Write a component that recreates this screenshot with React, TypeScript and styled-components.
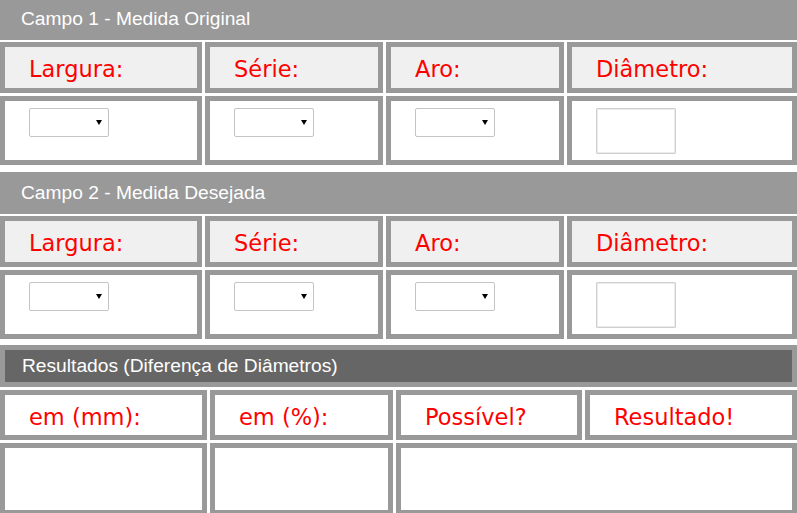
import React from "react";
import styled, { createGlobalStyle } from "styled-components";

const GlobalStyle = createGlobalStyle`
  html, body { margin: 0; padding: 0; background: #ffffff; }
  body { font-family: "Liberation Sans", Arial, sans-serif; overflow: hidden; }
  * { box-sizing: border-box; }
`;

const Page = styled.div`
  width: 797px;
  margin-top: -2px;
  display: flex;
  flex-direction: column;
`;

const Section = styled.section<{ $top?: number }>`
  display: flex;
  flex-direction: column;
  margin-top: ${(p) => p.$top ?? 0}px;
`;

const SectionHeader = styled.div<{ $dark?: boolean }>`
  height: 42px;
  display: flex;
  align-items: center;
  padding-left: ${(p) => (p.$dark ? 17 : 21)}px;
  background: ${(p) => (p.$dark ? "#666666" : "#999999")};
  border: ${(p) => (p.$dark ? "5px solid #999999" : "none")};
  color: #ffffff;
  font-family: "Liberation Sans", Arial, sans-serif;
  font-size: 19.2px;
  padding-bottom: ${(p) => (p.$dark ? 0 : 1)}px;
`;

const Row = styled.div<{ $cols: string; $top: number }>`
  display: grid;
  grid-template-columns: ${(p) => p.$cols};
  column-gap: 3px;
  margin-top: ${(p) => p.$top}px;
`;

const LabelCell = styled.div<{ $white?: boolean; $h: number }>`
  height: ${(p) => p.$h}px;
  border: 5px solid #999999;
  background: ${(p) => (p.$white ? "#ffffff" : "#f0f0f0")};
  display: flex;
  align-items: center;
  padding-left: 24px;
  padding-top: 3px;
  color: #ff0000;
  font-family: "DejaVu Sans", Verdana, sans-serif;
  font-size: 22.5px;
`;

const InputCell = styled.div<{ $h: number; $span?: number }>`
  height: ${(p) => p.$h}px;
  border: 5px solid #999999;
  background: #ffffff;
  padding: 7px 0 0 24px;
  grid-column: ${(p) => (p.$span ? `span ${p.$span}` : "auto")};
`;

const SelectWrap = styled.span`
  position: relative;
  display: inline-block;
  width: 80px;
  height: 29px;
  &::after {
    content: "";
    position: absolute;
    right: 7px;
    top: 12px;
    border-left: 3px solid transparent;
    border-right: 3px solid transparent;
    border-top: 5px solid #000000;
    pointer-events: none;
  }
`;

const Select = styled.select`
  appearance: none;
  -webkit-appearance: none;
  width: 80px;
  height: 29px;
  margin: 0;
  border: 1px solid #c4c4c4;
  border-radius: 2px;
  background: #ffffff;
  font-family: "Liberation Sans", Arial, sans-serif;
  font-size: 13px;
  outline: none;
`;

const TextBox = styled.input`
  display: block;
  width: 80px;
  height: 46px;
  margin: 0;
  border: 1px solid #cfcfcf;
  box-shadow: inset 0 0 0 1px #ececec;
  border-radius: 1px;
  background: #ffffff;
  outline: none;
  font-family: "Liberation Sans", Arial, sans-serif;
  font-size: 14px;
`;

const FIELD_COLS = "202px 178px 178px 230px";
const RESULT_COLS = "207px 183px 186px 212px";

const fields = ["Largura:", "Série:", "Aro:"];

function Campo({ title, top }: { title: string; top: number }) {
  return (
    <Section $top={top}>
      <SectionHeader>{title}</SectionHeader>
      <Row $cols={FIELD_COLS} $top={2}>
        {fields.map((f) => (
          <LabelCell key={f} $h={51}>
            {f}
          </LabelCell>
        ))}
        <LabelCell $h={51}>Diâmetro:</LabelCell>
      </Row>
      <Row $cols={FIELD_COLS} $top={3}>
        {fields.map((f) => (
          <InputCell key={f} $h={69}>
            <SelectWrap>
              <Select defaultValue="">
                <option value=""></option>
              </Select>
            </SelectWrap>
          </InputCell>
        ))}
        <InputCell $h={69}>
          <TextBox type="text" />
        </InputCell>
      </Row>
    </Section>
  );
}

export default function App() {
  return (
    <>
      <GlobalStyle />
      <Page>
        <Campo title="Campo 1 - Medida Original" top={0} />
        <Campo title="Campo 2 - Medida Desejada" top={7} />
        <Section $top={6}>
          <SectionHeader $dark>Resultados (Diferença de Diâmetros)</SectionHeader>
          <Row $cols={RESULT_COLS} $top={3}>
            <LabelCell $white $h={50}>em (mm):</LabelCell>
            <LabelCell $white $h={50}>em (%):</LabelCell>
            <LabelCell $white $h={50}>Possível?</LabelCell>
            <LabelCell $white $h={50}>Resultado!</LabelCell>
          </Row>
          <Row $cols={RESULT_COLS} $top={3}>
            <InputCell $h={72} />
            <InputCell $h={72} />
            <InputCell $h={72} $span={2} />
          </Row>
        </Section>
      </Page>
    </>
  );
}
